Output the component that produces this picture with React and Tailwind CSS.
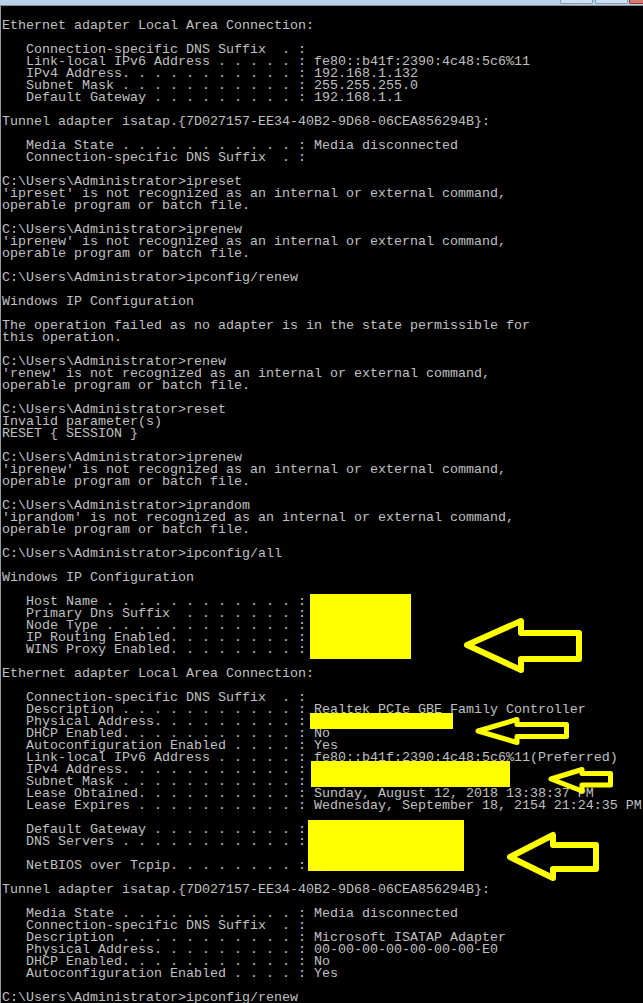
import React from "react";

// ipconfig style "label . . . . : value"
const kv = (label, value = "", dots) => {
  let left = "   " + label;
  if (dots) {
    left += dots;
  } else {
    for (let p = left.length; p < 36; p++) {
      left += p % 2 === 1 ? "." : " ";
    }
  }
  return left + " : " + value;
};

const CONN = "Connection-specific DNS Suffix";
const TUNNEL = "Tunnel adapter isatap.{7D027157-EE34-40B2-9D68-06CEA856294B}:";
const PROMPT = "C:\\Users\\Administrator>";
const notRecognized = (cmd) => [
  `'${cmd}' is not recognized as an internal or external command,`,
  "operable program or batch file.",
];

const lines = [
  "",
  "Ethernet adapter Local Area Connection:",
  "",
  kv(CONN, "", "  ."),
  kv("Link-local IPv6 Address", "fe80::b41f:2390:4c48:5c6%11"),
  kv("IPv4 Address", "192.168.1.132"),
  kv("Subnet Mask", "255.255.255.0"),
  kv("Default Gateway", "192.168.1.1"),
  "",
  TUNNEL,
  "",
  kv("Media State", "Media disconnected"),
  kv(CONN, "", "  ."),
  "",
  PROMPT + "ipreset",
  ...notRecognized("ipreset"),
  "",
  PROMPT + "iprenew",
  ...notRecognized("iprenew"),
  "",
  PROMPT + "ipconfig/renew",
  "",
  "Windows IP Configuration",
  "",
  "The operation failed as no adapter is in the state permissible for",
  "this operation.",
  "",
  PROMPT + "renew",
  ...notRecognized("renew"),
  "",
  PROMPT + "reset",
  "Invalid parameter(s)",
  "RESET { SESSION }",
  "",
  PROMPT + "iprenew",
  ...notRecognized("iprenew"),
  "",
  PROMPT + "iprandom",
  ...notRecognized("iprandom"),
  "",
  PROMPT + "ipconfig/all",
  "",
  "Windows IP Configuration",
  "",
  kv("Host Name"),
  kv("Primary Dns Suffix", "", "  . . . . . . ."),
  kv("Node Type"),
  kv("IP Routing Enabled"),
  kv("WINS Proxy Enabled"),
  "",
  "Ethernet adapter Local Area Connection:",
  "",
  kv(CONN, "", "  ."),
  kv("Description", "Realtek PCIe GBE Family Controller"),
  kv("Physical Address"),
  kv("DHCP Enabled", "No"),
  kv("Autoconfiguration Enabled", "Yes"),
  kv("Link-local IPv6 Address", "fe80::b41f:2390:4c48:5c6%11(Preferred)"),
  kv("IPv4 Address"),
  kv("Subnet Mask"),
  kv("Lease Obtained", "Sunday, August 12, 2018 13:38:37 PM"),
  kv("Lease Expires", "Wednesday, September 18, 2154 21:24:35 PM"),
  "",
  kv("Default Gateway"),
  kv("DNS Servers"),
  "",
  kv("NetBIOS over Tcpip"),
  "",
  TUNNEL,
  "",
  kv("Media State", "Media disconnected"),
  kv(CONN, "", "  ."),
  kv("Description", "Microsoft ISATAP Adapter"),
  kv("Physical Address", "00-00-00-00-00-00-00-E0"),
  kv("DHCP Enabled", "No"),
  kv("Autoconfiguration Enabled", "Yes"),
  "",
  PROMPT + "ipconfig/renew",
];

// yellow boxes painted over the private values
const boxes = [
  { x: 310, y: 594, w: 101, h: 65 },
  { x: 310, y: 713, w: 143, h: 16 },
  { x: 311, y: 761, w: 199, h: 26 },
  { x: 308, y: 820, w: 156, h: 51 },
];

const arrows = [
  { pts: "467,645 521,621 521,633 579,633 579,659 521,659 521,670", sw: 6 },
  { pts: "478,731 517,719.5 517,724.5 566.5,724.5 566.5,736.5 517,736.5 517,742.5", sw: 5 },
  { pts: "551,779 582,769.5 582,773.5 610.5,773.5 610.5,785 582,785 582,791", sw: 5 },
  { pts: "510,857 553,835 553,845 596,845 596,869 553,869 553,878", sw: 6 },
];

export default function App() {
  return (
    <div className="relative w-[643px] h-[1003px] overflow-hidden bg-black">
      {/* window title bar, bottom sliver only */}
      <div className="flex h-[5px] justify-end bg-[#b9d1ea]">
        <div className="w-[33px] h-[4px] border-x border-b border-[#7f9db9] rounded-b-[2px] bg-[#cfe0f3]" />
        <div className="ml-[2px] w-[33px] h-[4px] border-x border-b border-[#7f9db9] rounded-b-[2px] bg-[#cfe0f3]" />
        <div className="ml-px w-[14px] h-[4px] border-l border-b border-[#8c3a36] rounded-bl-[2px] bg-[#d77a6e]" />
      </div>
      <div className="h-px bg-[#8d8d8d]" />

      <div className="border-l border-[#9a9a9a] pl-px pt-[2px] h-full">
        <div className="font-['Liberation_Mono','DejaVu_Sans_Mono',monospace] text-[13.3333px] leading-[12px] text-[#c0c0c0] whitespace-pre">
          {lines.map((l, i) => (
            <div key={i} className="h-[12px]">
              {l}
            </div>
          ))}
        </div>
      </div>

      {boxes.map((b, i) => (
        <div
          key={i}
          className="absolute bg-[#ffff00]"
          style={{ left: b.x, top: b.y, width: b.w, height: b.h }}
        />
      ))}

      <svg className="absolute left-0 top-0 pointer-events-none" width="643" height="1003">
        {arrows.map((a, i) => (
          <polygon
            key={i}
            points={a.pts}
            fill="none"
            stroke="#ffff00"
            strokeWidth={a.sw}
            strokeLinejoin="round"
          />
        ))}
      </svg>
    </div>
  );
}
